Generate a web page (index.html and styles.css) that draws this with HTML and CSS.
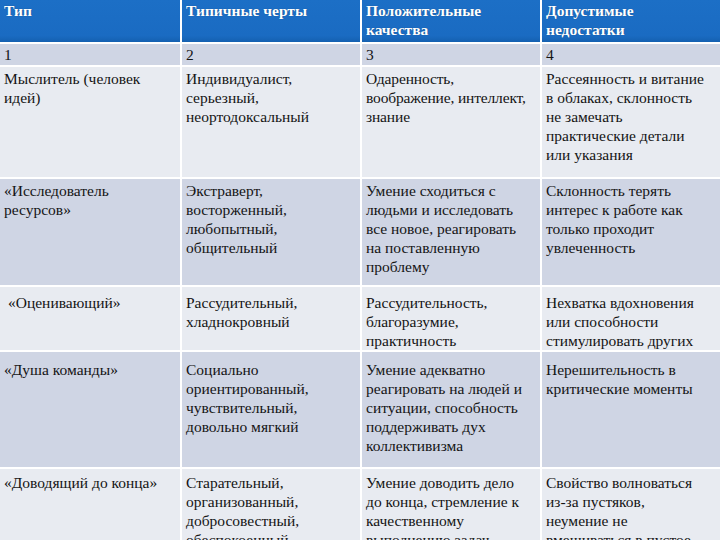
FILE: index.html
```html
<!DOCTYPE html>
<html lang="ru">
<head>
<meta charset="utf-8">
<title>Роли в команде</title>
<link rel="stylesheet" href="styles.css">
</head>
<body>
<div class="table">
  <div class="cell head">Тип</div>
  <div class="cell head">Типичные черты</div>
  <div class="cell head">Положительные<br>качества</div>
  <div class="cell head">Допустимые<br>недостатки</div>

  <div class="cell dark r-num">1</div>
  <div class="cell dark r-num">2</div>
  <div class="cell dark r-num">3</div>
  <div class="cell dark r-num">4</div>

  <div class="cell light r1">Мыслитель (человек<br>идей)</div>
  <div class="cell light r1">Индивидуалист,<br>серьезный,<br>неортодоксальный</div>
  <div class="cell light r1 tight">Одаренность,<br>воображение, интеллект,<br>знание</div>
  <div class="cell light r1">Рассеянность и витание<br>в облаках, склонность<br>не замечать<br>практические детали<br>или указания</div>

  <div class="cell dark r2">«Исследователь<br>ресурсов»</div>
  <div class="cell dark r2">Экстраверт,<br>восторженный,<br>любопытный,<br>общительный</div>
  <div class="cell dark r2">Умение сходиться с<br>людьми и исследовать<br>все новое, реагировать<br>на поставленную<br>проблему</div>
  <div class="cell dark r2">Склонность терять<br>интерес к работе как<br>только проходит<br>увлеченность</div>

  <div class="cell light r3"><span class="indent">«Оценивающий»</span></div>
  <div class="cell light r3">Рассудительный,<br>хладнокровный</div>
  <div class="cell light r3">Рассудительность,<br>благоразумие,<br>практичность</div>
  <div class="cell light r3">Нехватка вдохновения<br>или способности<br>стимулировать других</div>

  <div class="cell dark r4">«Душа команды»</div>
  <div class="cell dark r4">Социально<br>ориентированный,<br>чувствительный,<br>довольно мягкий</div>
  <div class="cell dark r4">Умение адекватно<br>реагировать на людей и<br>ситуации, способность<br>поддерживать дух<br>коллективизма</div>
  <div class="cell dark r4">Нерешительность в<br>критические моменты</div>

  <div class="cell light r5">«Доводящий до конца»</div>
  <div class="cell light r5">Старательный,<br>организованный,<br>добросовестный,<br>обеспокоенный</div>
  <div class="cell light r5">Умение доводить дело<br>до конца, стремление к<br>качественному<br>выполнению задач</div>
  <div class="cell light r5">Свойство волноваться<br>из-за пустяков,<br>неумение не<br>вмешиваться в пустое</div>
</div>
</body>
</html>
```

FILE: styles.css
```css
html, body {
  margin: 0;
  padding: 0;
  background: #ffffff;
  overflow: hidden;
}
body {
  width: 720px;
  height: 540px;
}
.table {
  display: grid;
  grid-template-columns: 180px 178px 178px 178px;
  grid-template-rows: 42px 21px 110px 106px 63px 115px 110px;
  gap: 2px;
  background: #ffffff;
  font-family: "Liberation Serif", "Times New Roman", serif;
  font-size: 15.5px;
  line-height: 19px;
  color: #141414;
}
.cell {
  padding: 2px 1px 0 4px;
  white-space: nowrap;
  overflow: hidden;
}
.tight {
  letter-spacing: -0.15px;
}
.head {
  background: linear-gradient(#1c6fc6 0%, #1a6bc2 85%, #1460b0 100%);
  color: #ffffff;
  font-weight: bold;
  padding-top: 1px;
  text-shadow: 0 0 1px rgba(0, 0, 0, 0.35);
}
.dark {
  background: #cfd5e4;
}
.light {
  background: #e8ebf1;
}
.r-num { padding-top: 1px; }
.r1 { padding-top: 2px; }
.r2 { padding-top: 2px; }
.r3 { padding-top: 6px; }
.r4 { padding-top: 8px; }
.r5 { padding-top: 4px; }
.indent {
  padding-left: 4px;
}
```
